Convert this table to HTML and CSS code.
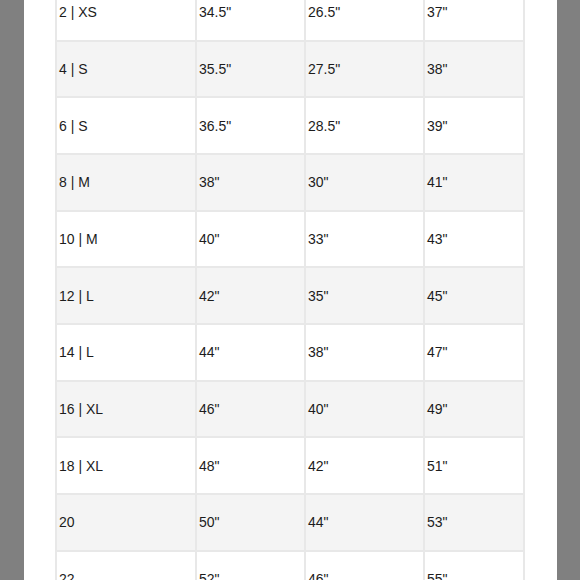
FILE: index.html
```html
<!DOCTYPE html>
<html>
<head>
<meta charset="utf-8">
<link rel="stylesheet" href="styles.css">
</head>
<body>
<div class="page">
  <table class="sizes">
    <colgroup>
      <col class="c1"><col class="c2"><col class="c3"><col class="c4">
    </colgroup>
    <tbody>
      <tr><td>2 | XS</td><td>34.5"</td><td>26.5"</td><td>37"</td></tr>
      <tr><td>4 | S</td><td>35.5"</td><td>27.5"</td><td>38"</td></tr>
      <tr><td>6 | S</td><td>36.5"</td><td>28.5"</td><td>39"</td></tr>
      <tr><td>8 | M</td><td>38"</td><td>30"</td><td>41"</td></tr>
      <tr><td>10 | M</td><td>40"</td><td>33"</td><td>43"</td></tr>
      <tr><td>12 | L</td><td>42"</td><td>35"</td><td>45"</td></tr>
      <tr><td>14 | L</td><td>44"</td><td>38"</td><td>47"</td></tr>
      <tr><td>16 | XL</td><td>46"</td><td>40"</td><td>49"</td></tr>
      <tr><td>18 | XL</td><td>48"</td><td>42"</td><td>51"</td></tr>
      <tr><td>20</td><td>50"</td><td>44"</td><td>53"</td></tr>
      <tr><td>22</td><td>52"</td><td>46"</td><td>55"</td></tr>
    </tbody>
  </table>
</div>
</body>
</html>
```

FILE: styles.css
```css
html, body {
  margin: 0;
  padding: 0;
  background: #808080;
  height: 580px;
  overflow: hidden;
}
.page {
  margin: 0 23px 0 24px;
  height: 580px;
  background: #ffffff;
  padding: 0 32px 0 31px;
  overflow: hidden;
}
.sizes {
  margin-top: -15px;
  width: 470px;
  table-layout: fixed;
  border-collapse: separate;
  border-spacing: 0;
  border-left: 2px solid #e8e8e8;
  font-family: "Liberation Sans", Arial, sans-serif;
  font-size: 14px;
  color: #1c1c1c;
}
.c1 { width: 140px; }
.c2 { width: 109px; }
.c3 { width: 119px; }
.c4 { width: 100px; }
.sizes td {
  height: 56.67px;
  box-sizing: border-box;
  padding: 0 0 0 2px;
  border-right: 2px solid #e8e8e8;
  border-bottom: 2px solid #e8e8e8;
  vertical-align: middle;
  white-space: nowrap;
}
.sizes tr:nth-child(even) td {
  background: #f4f4f4;
}
```
